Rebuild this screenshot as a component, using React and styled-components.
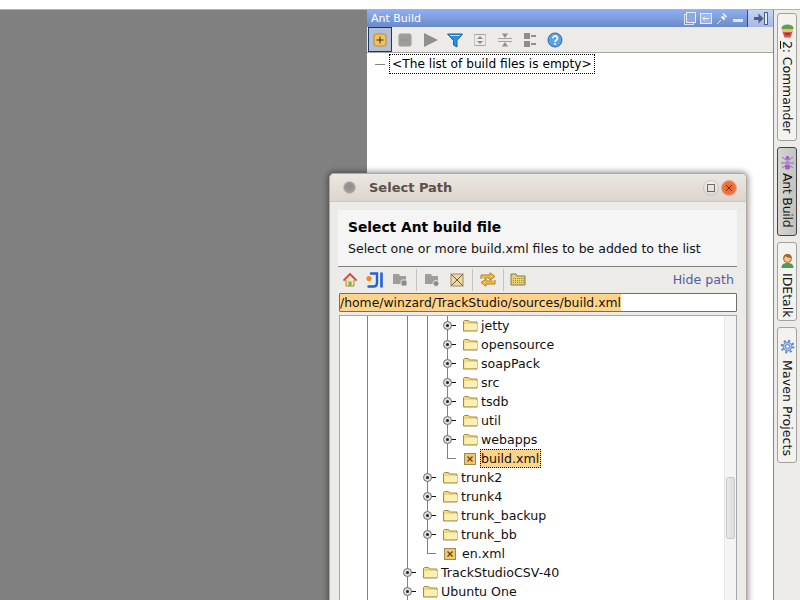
import React from 'react';
import styled, { createGlobalStyle } from 'styled-components';

const GlobalStyle = createGlobalStyle`
  html, body {
    margin: 0;
    width: 800px;
    height: 600px;
    overflow: hidden;
    background: #fff;
    font-family: "DejaVu Sans", sans-serif;
  }
`;

const Page = styled.div`
  position: relative;
  width: 800px;
  height: 600px;
  overflow: hidden;
`;

const TopStrip = styled.div`
  height: 9px;
  background: #fff;
  border-bottom: 1px solid #b4b2ae;
`;

const Main = styled.div`
  display: flex;
  height: 590px;
`;

const EditorArea = styled.div`
  width: 367px;
  background: #808080;
`;

const AntPanel = styled.div`
  flex: 1;
  display: flex;
  flex-direction: column;
  background: #fff;
`;

const PanelHeader = styled.div`
  display: flex;
  align-items: center;
  height: 17px;
  padding-left: 4px;
  background: linear-gradient(#8fadf0, #6c8bcb);
  color: #fff;
  font-size: 11px;
`;

const PanelTitle = styled.span`
  flex: 1;
`;

const HeaderIcons = styled.div`
  display: flex;
  gap: 4px;
  margin-right: 3px;
`;

const HideButton = styled.div`
  display: flex;
  align-items: center;
  justify-content: center;
  width: 25px;
  height: 17px;
  border-left: 1px solid #2c4a8c;
  background: linear-gradient(#c6d5f3, #a4b8e2);
`;

const PanelToolbar = styled.div`
  display: flex;
  align-items: center;
  height: 25px;
  padding-left: 1px;
  background: #ecebe8;
  border-bottom: 1px solid #a9a8a5;
`;

const ToolButton = styled.div`
  display: flex;
  align-items: center;
  justify-content: center;
  box-sizing: border-box;
  width: ${(p) => (p.$active ? 24 : 25)}px;
  height: 25px;
  ${(p) => p.$active && 'background: #b3c0d8; border: 1px solid #1f3563;'}
`;

const AntTree = styled.div`
  display: flex;
  align-items: center;
  height: 20px;
  margin-top: 1px;
  padding-left: 8px;
`;

const AntDash = styled.span`
  width: 10px;
  height: 1px;
  margin-right: 4px;
  background: #808080;
`;

const EmptyLabel = styled.span`
  box-sizing: border-box;
  height: 20px;
  padding: 0 2px;
  border: 1px dotted #000;
  font-size: 12.2px;
  line-height: 18px;
  color: #000;
  white-space: nowrap;
`;

const Stripe = styled.div`
  box-sizing: border-box;
  display: flex;
  flex-direction: column;
  gap: 6px;
  width: 27px;
  padding: 3px 0 0 3px;
  background: #ecebe8;
  border-left: 1px solid #858585;
`;

const Tab = styled.div`
  box-sizing: border-box;
  display: flex;
  flex-direction: column;
  align-items: center;
  gap: ${(p) => p.$gap}px;
  width: 20px;
  height: ${(p) => p.$h}px;
  padding-top: ${(p) => p.$pad}px;
  border: 1px solid ${(p) => (p.$active ? '#444' : '#a3a19d')};
  border-radius: 3px;
  background: ${(p) => (p.$active ? 'linear-gradient(90deg, #d6d5d2, #c4c3c0)' : '#f3f2ef')};
`;

const TabText = styled.span`
  writing-mode: vertical-rl;
  font-size: 12.5px;
  letter-spacing: ${(p) => p.$spacing || 0}px;
  line-height: 18px;
  color: #111;
  white-space: nowrap;
`;

const Dialog = styled.div`
  position: absolute;
  left: 329px;
  top: 173px;
  box-sizing: border-box;
  width: 418px;
  height: 440px;
  background: #edebe8;
  border: 1px solid #b3a99e;
  border-radius: 5px 5px 0 0;
  box-shadow: 0 0 6px 1px rgba(0, 0, 0, 0.45);
`;

const TitleBar = styled.div`
  display: flex;
  align-items: center;
  height: 27px;
  padding: 0 9px 0 13px;
  background: linear-gradient(#ebe7e1, #dcd5cd);
  border-bottom: 1px solid #cfc8bf;
  border-radius: 4px 4px 0 0;
`;

const TitleDot = styled.span`
  width: 11px;
  height: 11px;
  border-radius: 50%;
  background: radial-gradient(circle at 50% 40%, #8f8b86, #a9a5a0);
  border: 1px solid #c4bfb9;
`;

const TitleText = styled.span`
  flex: 1;
  margin-left: 13px;
  font-size: 13px;
  font-weight: bold;
  color: #5a5149;
`;

const WinButton = styled.span`
  display: flex;
  align-items: center;
  justify-content: center;
  box-sizing: border-box;
  width: 16px;
  height: 16px;
  margin-left: 2px;
  border-radius: 50%;
  border: 1px solid ${(p) => (p.$close ? '#e3a488' : '#c9c4be')};
  background: ${(p) => (p.$close ? 'radial-gradient(circle, #e8602f, #f2834f)' : 'linear-gradient(#f2f0ed, #dcd8d3)')};
`;

const DialogBody = styled.div`
  padding: 8px 9px 0 8px;
`;

const InfoPanel = styled.div`
  box-sizing: border-box;
  height: 57px;
  padding: 9px 10px 0;
  background: #f5f5f5;
  border-bottom: 1px solid #808080;
`;

const InfoTitle = styled.div`
  font-size: 13.8px;
  font-weight: bold;
  line-height: 17px;
  color: #000;
`;

const InfoText = styled.div`
  margin-top: 5px;
  font-size: 12.5px;
  line-height: 15px;
  color: #111;
  white-space: nowrap;
`;

const PathToolbar = styled.div`
  box-sizing: border-box;
  display: flex;
  align-items: center;
  height: 25px;
  margin: 1px 0 0 -1px;
  padding-bottom: 2px;
`;

const PathTool = styled.span`
  display: flex;
  justify-content: center;
  width: 25px;
`;

const Divider = styled.span`
  width: 1px;
  height: 22px;
  background: #c3c2be;
  margin-left: ${(p) => p.$l}px;
  margin-right: ${(p) => p.$r}px;
`;

const HidePath = styled.span`
  margin-left: auto;
  margin-right: 3px;
  font-size: 12.6px;
  color: #4f5e9e;
`;

const PathInput = styled.div`
  box-sizing: border-box;
  height: 19px;
  margin-left: 1px;
  background: #fff;
  border: 1px solid #6f6f6f;
  border-radius: 1px;
  font-size: 12.4px;
  line-height: 17px;
  color: #111;
  white-space: nowrap;
`;

const Selected = styled.span`
  display: inline-block;
  background: #ffd48a;
`;

const TreeBox = styled.div`
  display: flex;
  box-sizing: border-box;
  height: 300px;
  margin: 3px 0 0 1px;
  background: #fff;
  border: 1px solid #a6a6a6;
  border-bottom: 0;
`;

const TreeRows = styled.div`
  flex: 1;
`;

const Row = styled.div`
  display: flex;
  align-items: center;
  height: 19px;
  padding-left: 17px;
`;

const Guide = styled.span`
  flex: none;
  align-self: stretch;
  width: 20px;
  ${(p) => p.$on && 'background: linear-gradient(#808080, #808080) no-repeat 10px 0 / 1px 100%;'}
`;

const NodeIcon = styled.span`
  display: flex;
  margin: 0 ${(p) => (p.$file ? 5 : 3)}px 0 6px;
`;

const NodeLabel = styled.span`
  box-sizing: border-box;
  height: 19px;
  font-size: 12.6px;
  line-height: 19px;
  color: #111;
  white-space: nowrap;
  ${(p) =>
    p.$selected &&
    'background: #ffd48a; border: 1px dotted #000; line-height: 17px; padding-right: 1px; margin-left: -2px;'}
`;

const ScrollTrack = styled.div`
  box-sizing: border-box;
  width: 12px;
  padding: 161px 1px 0 1px;
  background: #f4f4f4;
  border-left: 1px solid #e6e6e6;
`;

const ScrollThumb = styled.div`
  box-sizing: border-box;
  height: 62px;
  background: linear-gradient(90deg, #e9e9e9, #dcdcdc);
  border: 1px solid #c9c9c9;
  border-radius: 2px;
`;

const Svg = ({ w = 16, h = 16, children }) => (
  <svg width={w} height={h} viewBox={`0 0 ${w} ${h}`} style={{ display: 'block', flex: 'none' }}>
    {children}
  </svg>
);

const FolderIcon = () => (
  <Svg w={15} h={13}>
    <path d="M0.5 12V2.5l1-1h4l1 1.5h7.5v9z" fill="#f6d777" stroke="#9c8b55" />
    <path d="M1.5 5h12.5v6H1.5z" fill="#fdf0b4" />
  </Svg>
);

const XmlIcon = () => (
  <Svg w={14} h={14}>
    <rect x="1.5" y="1.5" width="11" height="11" fill="#f4c86a" stroke="#9a8a58" />
    <path d="M4.5 4.5l5 5M9.5 4.5l-5 5" stroke="#5b4a28" strokeWidth="1.3" />
  </Svg>
);

const Connector = ({ last, expand }) => (
  <Svg w={20} h={19}>
    <path d={last ? 'M10.5 0v9.5' : 'M10.5 0v19'} stroke="#808080" fill="none" />
    <path d="M10 9.5h9" stroke={expand ? '#111' : '#808080'} fill="none" />
    {expand && (
      <>
        <circle cx="10.5" cy="9.5" r="4" fill="#dedede" stroke="#6d6d6d" />
        <circle cx="10.5" cy="9.5" r="1.5" fill="#222" />
      </>
    )}
  </Svg>
);

const AddIcon = () => (
  <Svg>
    <rect x="2" y="2" width="12" height="12" rx="2" fill="#f6c25e" stroke="#b78a3a" />
    <path d="M8 4.5v7M4.5 8h7" stroke="#333" />
  </Svg>
);

const RemoveIcon = () => (
  <Svg>
    <rect x="1.5" y="1.5" width="13" height="13" rx="2.5" fill="#9c9c9a" />
    <path d="M4.5 8h7" stroke="#8a8a88" />
  </Svg>
);

const RunIcon = () => (
  <Svg>
    <path d="M2 1L16 8 2 15z" fill="#8f918f" />
  </Svg>
);

const FilterIcon = () => (
  <Svg>
    <path d="M0.5 2h15L10 8.5V15L6.5 13V8.5z" fill="#2d8ede" stroke="#1c5fa8" />
    <path d="M3 3.5h10" stroke="#bfe0fa" />
  </Svg>
);

const ExpandIcon = () => (
  <Svg>
    <path d="M2.5 2.5h11M2.5 13.5h11" stroke="#a3a3a0" />
    <path d="M2.5 2.5v11M13.5 2.5v11" stroke="#c6c6c3" />
    <path d="M8 4l3 3H5zM8 12l3-3H5z" fill="#8f8f8c" />
  </Svg>
);

const CollapseIcon = () => (
  <Svg>
    <path d="M1 6.5h14M1 9.5h14" stroke="#a3a3a0" />
    <path d="M8 6L5 1.5h6zM8 10l-3 4.5h6z" fill="#8f8f8c" />
  </Svg>
);

const GroupIcon = () => (
  <Svg>
    <rect x="2" y="1" width="6" height="6" fill="#8d8d8a" />
    <rect x="2" y="9" width="6" height="6" fill="#8d8d8a" />
    <path d="M9 4h5M9 12h5" stroke="#8d8d8a" strokeWidth="2" />
  </Svg>
);

const HelpIcon = () => (
  <Svg>
    <circle cx="8" cy="8" r="7" fill="#5ea2e2" stroke="#2c68ad" />
    <path d="M5.8 6.2a2.3 2.3 0 1 1 3.4 2c-.8.5-1.2.9-1.2 1.8" fill="none" stroke="#fff" strokeWidth="1.6" />
    <rect x="7.2" y="11" width="1.7" height="1.7" fill="#fff" />
  </Svg>
);

const FloatIcon = () => (
  <Svg w={12} h={13}>
    <rect x="0.5" y="2.5" width="9" height="10" fill="none" stroke="#d8e2f6" />
    <rect x="2.5" y="0.5" width="9" height="10" fill="#8fa9dd" stroke="#e6edfa" />
  </Svg>
);

const DockIcon = () => (
  <Svg w={12} h={13}>
    <rect x="0.5" y="1.5" width="11" height="10" fill="#9fb6e4" stroke="#e6edfa" />
    <path d="M9 6.5H3M5 4.5l-2 2 2 2" fill="none" stroke="#f2f5fc" />
  </Svg>
);

const PinIcon = () => (
  <Svg w={12} h={13}>
    <path d="M1 12l4-4" stroke="#dfe7f7" />
    <path d="M4 5l4 4 2-3-3-3z" fill="#dfe7f7" stroke="#8ea3cc" />
    <path d="M7 1.5l3.5 3.5" stroke="#f4f7fd" strokeWidth="1.5" />
  </Svg>
);

const MinimizeIcon = () => (
  <Svg w={12} h={13}>
    <rect x="1" y="7" width="10" height="3" fill="#dfe7f7" />
  </Svg>
);

const HidePanelIcon = () => (
  <Svg w={14} h={13}>
    <path d="M0 5L4.5 5V1.5L9.5 6.5 4.5 11.5V8H0z" fill="#4a5f83" />
    <rect x="10.5" y="0.5" width="3" height="12" fill="#e9eefa" stroke="#4a5f83" />
  </Svg>
);

const CommanderIcon = () => (
  <Svg w={15} h={15}>
    <ellipse cx="7.5" cy="4" rx="6" ry="3.6" fill="#5d9e58" />
    <rect x="2" y="5" width="11" height="3" fill="#e9c35c" />
    <path d="M2.5 8h10l-2 5.5h-6z" fill="#d9534a" />
    <path d="M5 10h5" stroke="#3d2f2a" />
  </Svg>
);

const AntIcon = () => (
  <Svg w={15} h={15}>
    <path d="M2 2l4 3M13 2L9 5M1 8h13M2 13l4-3M13 13l-4-3" stroke="#7d78ae" />
    <ellipse cx="7.5" cy="3" rx="2" ry="2" fill="#a05ed0" />
    <ellipse cx="7.5" cy="7.5" rx="2" ry="2.2" fill="#b87ae0" />
    <ellipse cx="7.5" cy="12" rx="2.6" ry="2.6" fill="#a05ed0" />
  </Svg>
);

const PersonIcon = () => (
  <Svg w={15} h={15}>
    <path d="M1.5 15c0-4 2.5-5 6-5s6 1 6 5z" fill="#4f9a54" />
    <circle cx="7.5" cy="5.5" r="4" fill="#f2c592" stroke="#a5662e" />
    <path d="M3.5 5c0-3 2-4 4-4s4 1 4 4c-2 0-5-.5-6-2-.3 1-1 2-2 2z" fill="#a5662e" />
  </Svg>
);

const GearIcon = () => (
  <Svg w={15} h={15}>
    <circle cx="7.5" cy="7.5" r="5.8" fill="none" stroke="#5f85cf" strokeWidth="2.2" strokeDasharray="2 2.55" />
    <circle cx="7.5" cy="7.5" r="4.4" fill="#a9c0ec" stroke="#5f85cf" />
    <circle cx="7.5" cy="7.5" r="2" fill="#f3f2ef" stroke="#5f85cf" />
  </Svg>
);

const HomeIcon = () => (
  <Svg w={14} h={14}>
    <path d="M3 7v6h8V7" fill="#f7e3a0" stroke="#a78a3e" />
    <rect x="5.5" y="8.5" width="3" height="4.5" fill="#6eb35a" />
    <path d="M0.5 7.5L7 1l6.5 6.5" fill="none" stroke="#d6462f" strokeWidth="1.8" />
  </Svg>
);

const IdeaIcon = () => (
  <Svg w={18} h={16}>
    <circle cx="3" cy="6.5" r="2.6" fill="#f08a24" />
    <path d="M5 1.5h6V11c0 2.4-1.5 3.5-3.5 3.5H2.5" fill="none" stroke="#1f63d6" strokeWidth="2.4" strokeLinecap="round" />
    <path d="M15.5 1.5v13" stroke="#1f63d6" strokeWidth="2.6" strokeLinecap="round" />
  </Svg>
);

const GrayFolderIcon = ({ gear }) => (
  <Svg w={16} h={14}>
    <path d="M1 1h6l1 2h6v8H1z" fill="#9d9d9a" />
    {gear ? (
      <circle cx="12" cy="10.5" r="3" fill="#8a8a87" stroke="#ecebe8" />
    ) : (
      <rect x="9" y="7" width="6" height="6" rx="1.5" fill="#8a8a87" stroke="#ecebe8" />
    )}
  </Svg>
);

const ClearIcon = () => (
  <Svg w={14} h={14}>
    <rect x="1" y="1" width="12" height="12" fill="#f2d8a8" stroke="#9a8a68" />
    <path d="M1.5 1.5l11 11M12.5 1.5l-11 11" stroke="#6a5a3a" />
  </Svg>
);

const RefreshIcon = () => (
  <Svg w={16} h={15}>
    <path d="M1 7V3h9V0.8L15 4.5 10 8V6H3.5" fill="#f6c23c" stroke="#a8802a" />
    <path d="M15 8v4H6v2.2L1 10.5 6 7v2h6.5" fill="#f6c23c" stroke="#a8802a" />
  </Svg>
);

const YellowFolderIcon = () => (
  <Svg w={16} h={13}>
    <path d="M1 1h5l1 2h8v9H1z" fill="#e8d070" stroke="#7f7a62" />
    <path d="M3 5.5h11M3 7.5h11M3 9.5h11" stroke="#a8902e" strokeDasharray="1 1" />
  </Svg>
);

const CloseGlyph = () => (
  <Svg w={8} h={8}>
    <path d="M1 1l6 6M7 1L1 7" stroke="#7a3518" />
  </Svg>
);

const MaxGlyph = () => (
  <Svg w={8} h={8}>
    <rect x="0.5" y="0.5" width="7" height="7" fill="none" stroke="#6b6660" />
  </Svg>
);

const panelTools = [
  [AddIcon, true],
  [RemoveIcon],
  [RunIcon],
  [FilterIcon],
  [ExpandIcon],
  [CollapseIcon],
  [GroupIcon],
  [HelpIcon],
];

// guides: which indent columns keep their vertical line
const nodes = [
  { label: 'jetty', guides: [1, 0, 1, 1], expand: true },
  { label: 'opensource', guides: [1, 0, 1, 1], expand: true },
  { label: 'soapPack', guides: [1, 0, 1, 1], expand: true },
  { label: 'src', guides: [1, 0, 1, 1], expand: true },
  { label: 'tsdb', guides: [1, 0, 1, 1], expand: true },
  { label: 'util', guides: [1, 0, 1, 1], expand: true },
  { label: 'webapps', guides: [1, 0, 1, 1], expand: true },
  { label: 'build.xml', guides: [1, 0, 1, 1], last: true, file: true, selected: true },
  { label: 'trunk2', guides: [1, 0, 1], expand: true },
  { label: 'trunk4', guides: [1, 0, 1], expand: true },
  { label: 'trunk_backup', guides: [1, 0, 1], expand: true },
  { label: 'trunk_bb', guides: [1, 0, 1], expand: true },
  { label: 'en.xml', guides: [1, 0, 1], last: true, file: true },
  { label: 'TrackStudioCSV-40', guides: [1, 0], expand: true },
  { label: 'Ubuntu One', guides: [1, 0], expand: true },
];

export default function App() {
  return (
    <Page>
      <GlobalStyle />
      <TopStrip />
      <Main>
        <EditorArea />
        <AntPanel>
          <PanelHeader>
            <PanelTitle>Ant Build</PanelTitle>
            <HeaderIcons>
              <FloatIcon />
              <DockIcon />
              <PinIcon />
              <MinimizeIcon />
            </HeaderIcons>
            <HideButton>
              <HidePanelIcon />
            </HideButton>
          </PanelHeader>
          <PanelToolbar>
            {panelTools.map(([Icon, active], i) => (
              <ToolButton key={i} $active={active}>
                <Icon />
              </ToolButton>
            ))}
          </PanelToolbar>
          <AntTree>
            <AntDash />
            <EmptyLabel>&lt;The list of build files is empty&gt;</EmptyLabel>
          </AntTree>
        </AntPanel>
        <Stripe>
          <Tab $h={128} $pad={10} $gap={2}>
            <CommanderIcon />
            <TabText $spacing={-0.1}>
              <u>2</u>: Commander
            </TabText>
          </Tab>
          <Tab $h={89} $pad={7} $gap={3} $active>
            <AntIcon />
            <TabText $spacing={-0.25}>Ant Build</TabText>
          </Tab>
          <Tab $h={79} $pad={10} $gap={5}>
            <PersonIcon />
            <TabText>IDEtalk</TabText>
          </Tab>
          <Tab $h={136} $pad={11} $gap={6}>
            <GearIcon />
            <TabText $spacing={0.1}>Maven Projects</TabText>
          </Tab>
        </Stripe>
      </Main>

      <Dialog>
        <TitleBar>
          <TitleDot />
          <TitleText>Select Path</TitleText>
          <WinButton>
            <MaxGlyph />
          </WinButton>
          <WinButton $close>
            <CloseGlyph />
          </WinButton>
        </TitleBar>
        <DialogBody>
          <InfoPanel>
            <InfoTitle>Select Ant build file</InfoTitle>
            <InfoText>Select one or more build.xml files to be added to the list</InfoText>
          </InfoPanel>
          <PathToolbar>
            <PathTool>
              <HomeIcon />
            </PathTool>
            <PathTool>
              <IdeaIcon />
            </PathTool>
            <PathTool>
              <GrayFolderIcon />
            </PathTool>
            <Divider $l={4} $r={2} />
            <PathTool>
              <GrayFolderIcon gear />
            </PathTool>
            <PathTool>
              <ClearIcon />
            </PathTool>
            <Divider $l={3} $r={2} />
            <PathTool>
              <RefreshIcon />
            </PathTool>
            <Divider $l={3} $r={1} />
            <PathTool>
              <YellowFolderIcon />
            </PathTool>
            <HidePath>Hide path</HidePath>
          </PathToolbar>
          <PathInput>
            <Selected>/home/winzard/TrackStudio/sources/build.xml</Selected>
          </PathInput>
          <TreeBox>
            <TreeRows>
              {nodes.map((n) => (
                <Row key={n.label}>
                  {n.guides.map((on, i) => (
                    <Guide key={i} $on={on} />
                  ))}
                  <Connector last={n.last} expand={n.expand} />
                  <NodeIcon $file={n.file}>{n.file ? <XmlIcon /> : <FolderIcon />}</NodeIcon>
                  <NodeLabel $selected={n.selected}>{n.label}</NodeLabel>
                </Row>
              ))}
            </TreeRows>
            <ScrollTrack>
              <ScrollThumb />
            </ScrollTrack>
          </TreeBox>
        </DialogBody>
      </Dialog>
    </Page>
  );
}
